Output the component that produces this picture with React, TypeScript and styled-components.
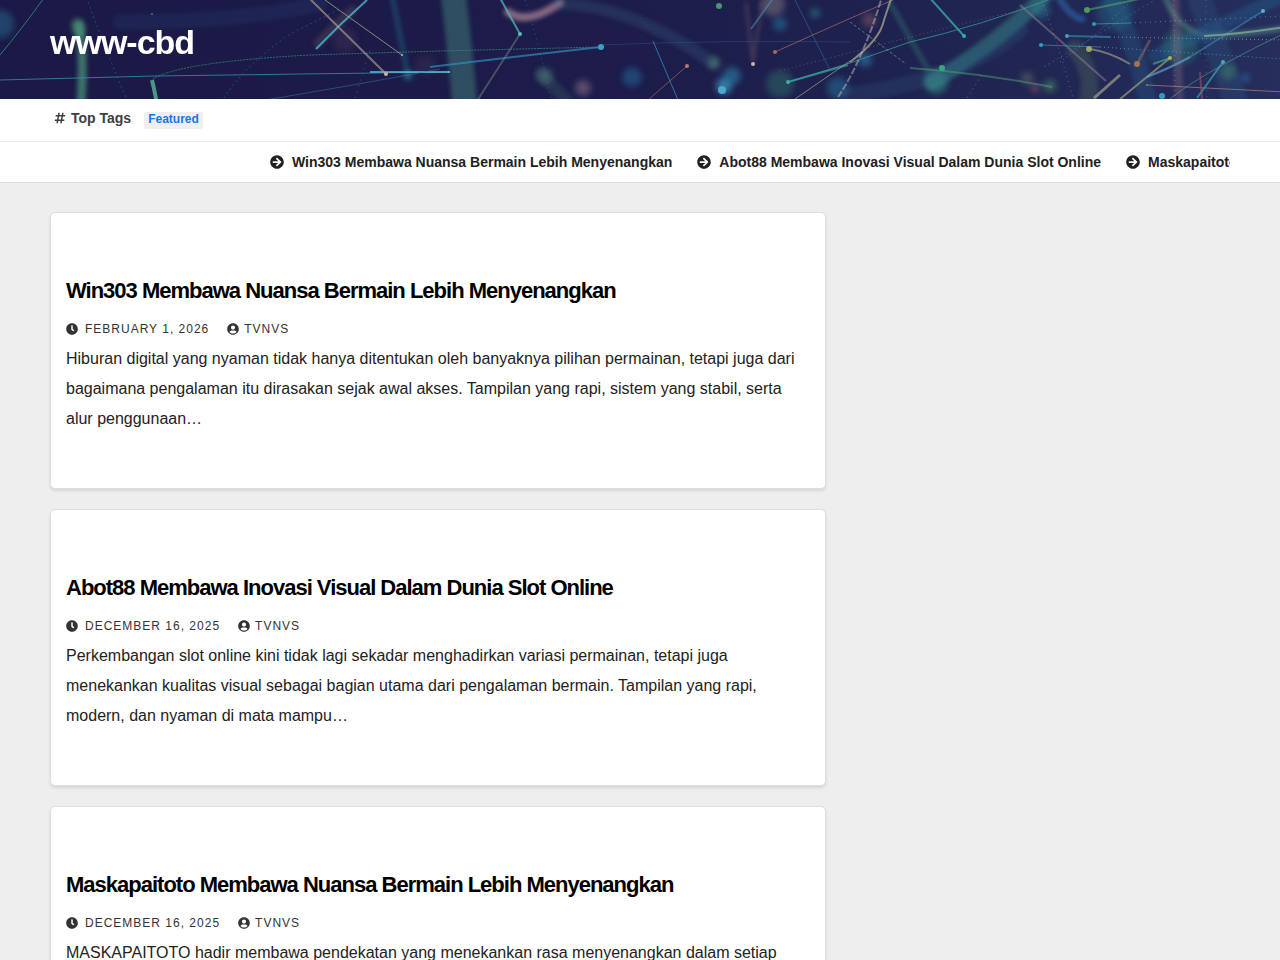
import React from "react";
import styled, { createGlobalStyle } from "styled-components";
import { FaArrowCircleRight, FaClock, FaHashtag, FaUserCircle } from "react-icons/fa";

const GlobalStyle = createGlobalStyle`
  *, *::before, *::after { box-sizing: border-box; }
  body {
    margin: 0;
    background: #eee;
    color: #222;
    font-family: Helvetica, "Liberation Sans", Arial, sans-serif;
    font-size: 16px;
    line-height: 30px;
    overflow-x: hidden;
  }
  a { color: inherit; text-decoration: none; }
  svg { flex-shrink: 0; }
`;

const Container = styled.div`
  padding: 0 50px;
`;

const Masthead = styled.header`
  position: relative;
  overflow: hidden;
  background: #1b1a45;
  padding: 22px 0 37px;
`;

const Backdrop = styled.svg`
  position: absolute;
  inset: 0;
  width: 100%;
  height: 100%;
`;

const SiteTitle = styled.h1`
  position: relative;
  margin: 0;
  color: #fff;
  font-size: 34px;
  line-height: 40px;
  letter-spacing: -1px;
`;

const TagBar = styled.section`
  background: #fff;
  border-bottom: 1px solid #eaeaea;
`;

const TagRow = styled.div`
  display: flex;
  align-items: center;
  height: 42px;
  padding: 0 4px 4px;
`;

const TagHeading = styled.h2`
  display: flex;
  align-items: center;
  gap: 5px;
  margin: 0 13px 0 0;
  color: #3c4043;
  font-size: 14px;
  line-height: 20px;
`;

const TagLink = styled.a`
  margin-top: 5px;
  padding: 0 4px 2px;
  border-radius: 2px;
  background: #f0eeee;
  color: #1179ee;
  font-size: 12px;
  font-weight: 700;
  line-height: 15px;
`;

const TickerBar = styled.section`
  background: #fff;
  border-bottom: 1px solid #ddd;
`;

const Ticker = styled.div`
  display: flex;
  gap: 25px;
  height: 40px;
  padding-left: 220px;
  overflow: hidden;
`;

const TickerLink = styled.a`
  display: flex;
  flex: none;
  align-items: center;
  gap: 8px;
  color: #212121;
  font-size: 14px;
  font-weight: 700;
  white-space: nowrap;
`;

const Row = styled.div`
  display: flex;
  margin: 0 -15px;
  padding: 29px 0;
`;

const MainColumn = styled.main`
  width: 66.6%;
  padding: 0 15px;
`;

const Card = styled.article`
  margin-bottom: 20px;
  padding: 63px 15px 54px;
  border: 1px solid #dedede;
  border-radius: 5px;
  background: #fff;
  box-shadow: 0 2px 3px rgba(0, 0, 0, 0.1);
`;

const CardTitle = styled.h2`
  margin: 0 0 8px;
  color: #000;
  font-size: 22px;
  line-height: 30px;
  letter-spacing: -1px;
`;

const Meta = styled.div`
  display: flex;
  gap: 18px;
  color: #333;
  font-size: 12px;
  letter-spacing: 1px;
  text-transform: uppercase;
`;

const MetaLink = styled.a<{ $gap: number }>`
  display: flex;
  align-items: center;
  gap: ${(p) => p.$gap}px;
`;

const Excerpt = styled.p`
  margin: 0;
`;

interface Post {
  title: string;
  date: string;
  excerpt: string;
}

const posts: Post[] = [
  {
    title: "Win303 Membawa Nuansa Bermain Lebih Menyenangkan",
    date: "February 1, 2026",
    excerpt:
      "Hiburan digital yang nyaman tidak hanya ditentukan oleh banyaknya pilihan permainan, tetapi juga dari bagaimana pengalaman itu dirasakan sejak awal akses. Tampilan yang rapi, sistem yang stabil, serta alur penggunaan…",
  },
  {
    title: "Abot88 Membawa Inovasi Visual Dalam Dunia Slot Online",
    date: "December 16, 2025",
    excerpt:
      "Perkembangan slot online kini tidak lagi sekadar menghadirkan variasi permainan, tetapi juga menekankan kualitas visual sebagai bagian utama dari pengalaman bermain. Tampilan yang rapi, modern, dan nyaman di mata mampu…",
  },
  {
    title: "Maskapaitoto Membawa Nuansa Bermain Lebih Menyenangkan",
    date: "December 16, 2025",
    excerpt: "MASKAPAITOTO hadir membawa pendekatan yang menekankan rasa menyenangkan dalam setiap",
  },
];

// Light trails: path, colour, width, opacity, optional dash pattern
type Trail = [string, string, number, number, string?];

const hazeTrails: Trail[] = [
  ["M452-15Q460 45 466 120", "#4b9482", 25, 0.42],
  ["M79 26Q85 60 80 115", "#4f9d7c", 9, 0.65],
  ["M78 25L79 30", "#4f9d7c", 14, 0.5],
  ["M1050-10Q1000 42 932 82", "#3d9d91", 15, 0.42],
  ["M1165-5Q1172 25 1205 36Q1250 34 1285 28", "#5c9a8c", 5, 0.55],
  ["M508 12Q526 26 560 3", "#c99aa8", 8, 0.6],
  ["M560 4Q630 5 712 62", "#38718b", 12, 0.25],
  ["M890 3L928 70", "#408f83", 5, 0.35],
  ["M1075 48Q1100 80 1082 114", "#6d985c", 17, 0.22],
  ["M1155 56L1285-5", "#2878a6", 14, 0.28],
  ["M392-5L408 77", "#297c93", 5, 0.38],
  ["M318 43L352 10", "#846e67", 9, 0.25],
  ["M541 74L570 104", "#4a9272", 13, 0.2],
  ["M120 22Q240 22 320 4", "#26518b", 15, 0.2],
  ["M1058-4Q1070 17 1082 19", "#307fd0", 6, 0.5],
  ["M1175 0L1180 114", "#a47f91", 8, 0.3],
  ["M1112 0Q1140 55 1150 114", "#2389a8", 18, 0.2],
  ["M1200 0L1240 114", "#305a85", 24, 0.3],
  ["M746 4L753 62L762 4", "#a17b7c", 3, 0.3],
  ["M850 95Q960 80 1020 30", "#2b5b83", 16, 0.25],
];

const trails: Trail[] = [
  ["M0 55Q20 31 44-2", "#3f8895", 1, 0.8],
  ["M0 80L155 76L449 72", "#36a0bc", 1, 0.7],
  ["M370 72L449 72", "#59bfd4", 2, 0.75],
  ["M88 2Q108 56 127 100", "#5277a4", 1, 0.45, "2 3"],
  ["M152 80Q154 88 157 104", "#58b795", 4, 0.8],
  ["M153 79Q180 62 310 55L440 51L601 47", "#3b9287", 1, 0.7, "2 1"],
  ["M224 98Q243 67 290 34L340 9", "#2f70ba", 1, 0.55, "2 3"],
  ["M316 49Q340 24 367 0", "#4ab8ce", 2, 0.8],
  ["M308-3L386 74", "#b39e91", 2, 0.65],
  ["M325 0L402 55", "#b0a98b", 1, 0.75],
  ["M355 98Q361 78 370 50", "#5b6c92", 1, 0.4, "2 4"],
  ["M265 100Q350 86 440 69", "#367fae", 1, 0.5],
  ["M430 67Q520 56 601 47", "#3393c0", 2, 0.65],
  ["M500-2L520 34", "#57b4ba", 2, 0.75],
  ["M520 34L475 104", "#73838a", 2, 0.5],
  ["M525 0Q541 50 551 100", "#4070ab", 1, 0.7, "1 4"],
  ["M601 45Q720 40 850 42", "#355a83", 1, 0.45],
  ["M653 41L678 100", "#3681bb", 1, 0.85],
  ["M687 66L648 100", "#aa6f62", 1, 0.65],
  ["M640 18L660 40", "#517aa4", 1, 0.4, "1 4"],
  ["M774-3L751 29", "#4a9caf", 2, 0.5],
  ["M795 0L829 68", "#397da0", 1, 0.5],
  ["M775 52Q850 18 893 0", "#a96c71", 1, 0.7],
  ["M788 82L850 63L910 42Q980 26 1056-3", "#36a398", 1, 0.75],
  ["M788 82L848 65", "#40b5ab", 2, 0.6],
  ["M795 99L850 61", "#b3a18c", 1, 0.7],
  ["M850 62Q880 40 884 20L892-4", "#c0ba98", 2, 0.65],
  ["M838 97Q863 60 882-3", "#b8aeb0", 2, 0.55, "7 2"],
  ["M850 22L906 64", "#789e83", 1, 0.7, "3 2"],
  ["M780 71Q920 34 1020 10", "#a0708c", 1, 0.6, "1 3"],
  ["M929-3L964 36", "#38aaa6", 2, 0.8],
  ["M910 68Q980 73 1052 87", "#519d78", 2, 0.5],
  ["M967 98L983 73", "#448b9b", 1, 0.5, "2 3"],
  ["M1020 5L1106 81", "#8d7991", 2, 0.55],
  ["M1042 0Q1062 57 1073 98", "#7aa0c8", 1, 0.6, "1 4"],
  ["M1060 62L1094 36L1130 2", "#6c9cc8", 1, 0.6, "1 3"],
  ["M1044 67L1158-2", "#4277af", 1, 0.55, "2 3"],
  ["M1041 45L1100 47", "#388dae", 1, 0.75],
  ["M1100 47L1282 59", "#6aa8c4", 1, 0.7, "1 3"],
  ["M1067 36L1110 37", "#3794ba", 2, 0.6],
  ["M1110 37L1285 40", "#7ab0ca", 1, 0.75, "1 3"],
  ["M1094 24L1130 23", "#4a91ae", 1, 0.75],
  ["M1130 23L1285 16", "#7ab0ca", 1, 0.6, "1 4"],
  ["M1087 10L1144-2", "#53a36e", 2, 0.6],
  ["M1090 49Q1110 52 1130 64", "#a6ad89", 2, 0.6],
  ["M1094 98L1120 75", "#aaa98b", 3, 0.65],
  ["M1120 99L1170 58", "#a9a974", 2, 0.65],
  ["M1153 64L1170 58", "#45b893", 2, 0.6],
  ["M1137 64L1150 40", "#a57871", 3, 0.4],
  ["M1147 77Q1170 68 1190 57", "#5b9fd0", 2, 0.7],
  ["M1190 57L1263 11", "#3a83b4", 2, 0.6],
  ["M1170 99Q1200 74 1285 33", "#5ca185", 1, 0.6],
  ["M1204 36Q1240 34 1285 27", "#8fbc9c", 2, 0.65],
  ["M1147 85L1285 92", "#b28379", 1, 0.7],
  ["M1197 98L1223 62", "#37a1bd", 2, 0.7],
  ["M1200 72L1202 99", "#a95465", 2, 0.5],
  ["M1206 0Q1205 50 1207 98", "#7191b9", 1, 0.5, "1 5"],
  ["M1174 0L1175 98", "#a0a0b8", 1, 0.5, "1 4"],
];

// Points of light: x, y, radius, colour
const sparks: [number, number, number, string][] = [
  [386, 74, 2, "#c6b5aa"], [402, 55, 1, "#c6bd79"], [601, 47, 3, "#3b9fc8"],
  [520, 34, 2, "#51beb6"], [449, 72, 1, "#66cadd"], [687, 66, 2, "#c4775f"],
  [719, 6, 3, "#469968"], [775, 52, 2, "#b96356"], [753, 64, 2, "#c4b5b8"],
  [788, 82, 2, "#41aea6"], [964, 36, 2, "#36aca3"], [942, 68, 3, "#37a780"],
  [1087, 10, 3, "#4c9a60"], [1094, 24, 2, "#3297bd"], [1067, 36, 2, "#3b9fc4"],
  [1041, 45, 2, "#359cc2"], [1089, 49, 3, "#9aaa57"], [1137, 64, 3, "#a8704f"],
  [1170, 58, 2, "#b9ac57"], [1263, 11, 2, "#65a9ca"], [1223, 62, 2, "#4ba6c2"],
  [1147, 85, 1, "#bd6267"], [1162, 96, 3, "#369bbd"], [722, 90, 4, "#4aa8cc"],
  [152, 14, 1, "#4f6f96"],
];

const glows: [number, number, number, string][] = [
  [0, 24, 14, "#245579"], [545, 76, 8, "#416a71"],
  [583, 88, 8, "#70617a"], [632, 77, 10, "#245486"], [714, 63, 6, "#538774"],
  [724, 86, 8, "#3e9dc6"], [732, 76, 9, "#28729b"], [773, 4, 12, "#675f70"],
  [780, 24, 7, "#216491"], [815, 13, 5, "#25757b"], [780, 84, 14, "#295761"],
  [838, 88, 11, "#245e88"], [865, 60, 7, "#286e9b"], [869, 20, 7, "#714c63"],
  [936, 82, 12, "#32777e"], [1027, 78, 6, "#4f6060"], [1050, 86, 6, "#448063"],
  [1035, 88, 4, "#93526c"], [1041, 10, 9, "#266581"], [1115, 12, 18, "#244e70"],
  [1180, 47, 18, "#265965"], [1228, 72, 8, "#3f7b61"], [1245, 78, 4, "#3271ad"],
  [408, 75, 4, "#2e8ea0"], [345, 40, 12, "#342650"], [425, 65, 10, "#2d294f"],
];

const drawTrail = ([d, stroke, width, opacity, dash]: Trail, i: number) => (
  <path key={i} d={d} stroke={stroke} strokeWidth={width} opacity={opacity} strokeDasharray={dash} />
);

function LightTrails() {
  return (
    <Backdrop viewBox="0 0 1280 99" preserveAspectRatio="xMidYMid slice" aria-hidden="true">
      <defs>
        <linearGradient id="night">
          <stop offset="0" stopColor="#1b1a46" />
          <stop offset="0.5" stopColor="#1d1c4a" />
          <stop offset="0.75" stopColor="#1f2450" />
          <stop offset="1" stopColor="#262e5c" />
        </linearGradient>
        <filter id="haze" filterUnits="userSpaceOnUse" x="-40" y="-40" width="1360" height="180">
          <feGaussianBlur stdDeviation="2" />
        </filter>
        <filter id="glow" filterUnits="userSpaceOnUse" x="-40" y="-40" width="1360" height="180">
          <feGaussianBlur stdDeviation="3" />
        </filter>
      </defs>
      <rect width="1280" height="99" fill="url(#night)" />
      <g filter="url(#glow)">
        {glows.map(([x, y, r, fill], i) => (
          <circle key={i} cx={x} cy={y} r={r} fill={fill} opacity="0.7" />
        ))}
      </g>
      <g filter="url(#haze)" fill="none" strokeLinecap="round">{hazeTrails.map(drawTrail)}</g>
      <g fill="none">{trails.map(drawTrail)}</g>
      {sparks.map(([x, y, r, fill], i) => (
        <circle key={i} cx={x} cy={y} r={r} fill={fill} />
      ))}
    </Backdrop>
  );
}

export default function App() {
  return (
    <>
      <GlobalStyle />
      <Masthead>
        <LightTrails />
        <Container>
          <SiteTitle><a href="#home">www-cbd</a></SiteTitle>
        </Container>
      </Masthead>
      <TagBar>
        <Container>
          <TagRow>
            <TagHeading><FaHashtag size={12} aria-hidden />Top Tags</TagHeading>
            <TagLink href="#featured">Featured</TagLink>
          </TagRow>
        </Container>
      </TagBar>
      <TickerBar>
        <Container>
          <Ticker>
            {posts.map((post) => (
              <TickerLink key={post.title} href="#post">
                <FaArrowCircleRight size={14} aria-hidden />
                <span>{post.title}</span>
              </TickerLink>
            ))}
          </Ticker>
        </Container>
      </TickerBar>
      <Container>
        <Row>
          <MainColumn>
            {posts.map((post) => (
              <Card key={post.title}>
                <CardTitle><a href="#post">{post.title}</a></CardTitle>
                <Meta>
                  <MetaLink href="#date" $gap={7}><FaClock size={12} aria-hidden />{post.date}</MetaLink>
                  <MetaLink href="#author" $gap={5}><FaUserCircle size={12} aria-hidden />tvnvs</MetaLink>
                </Meta>
                <Excerpt>{post.excerpt}</Excerpt>
              </Card>
            ))}
          </MainColumn>
        </Row>
      </Container>
    </>
  );
}
